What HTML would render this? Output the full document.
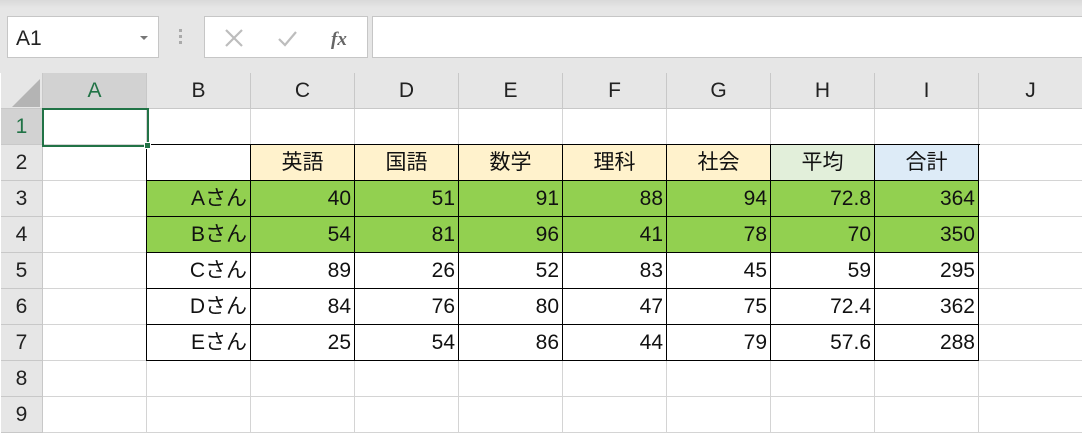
<!DOCTYPE html>
<html><head><meta charset="utf-8"><style>
*{box-sizing:border-box;margin:0;padding:0}
body{width:1082px;height:432px;overflow:hidden;background:#fff;font-family:"Liberation Sans","Noto Sans CJK JP",sans-serif;position:relative}
.top{position:absolute;left:0;top:0;width:1082px;height:73px;background:linear-gradient(#d9d9d9,#e6e6e6 8px,#e6e6e6)}
.nb{position:absolute;left:7px;top:16px;width:152px;height:42px;background:#fff;border:1px solid #c6c6c6;font-size:21px;color:#222;padding:10px 0 0 8px}
.nb:after{content:"";position:absolute;right:10px;top:19px;border:4px solid transparent;border-top:4px solid #777}
.dots{position:absolute;left:179px;top:29px;width:3px;height:16px;background:repeating-linear-gradient(#aaa 0 3px,transparent 3px 6px)}
.fb{position:absolute;left:204px;top:16px;width:164px;height:42px;background:#fff;border:1px solid #c6c6c6}
.fi{position:absolute;left:372px;top:16px;width:720px;height:42px;background:#fff;border:1px solid #c6c6c6}
.g{position:absolute;left:1px;top:73px;display:grid;grid-template-columns:42px repeat(10,104px);grid-auto-rows:36px}
.g div{border-right:1px solid #d4d4d4;border-bottom:1px solid #d4d4d4;font-size:21px;line-height:36px;color:#111;white-space:nowrap}
.g .h{background:#e6e6e6;border-color:#c8c8c8;text-align:center;color:#222}
.g .r{background:#e6e6e6;border-color:#c8c8c8;text-align:center;color:#222}
.g .sel{background:#d2d2d2;color:#217346}
.g .c{text-align:center}
.g .n{text-align:right;padding-right:3px}
.g .t{border-right:1px solid #000;border-bottom:1px solid #000}
.y{background:#fff2cc}.gr{background:#e2efda}.bl{background:#ddebf7}.gn{background:#92d050}
.corner{position:absolute;left:12px;top:79px;width:0;height:0;border-left:28px solid transparent;border-bottom:28px solid #b4b4b4}
.act{position:absolute;left:42px;top:108px;width:107px;height:39px;border:2px solid #217346}
.hd{position:absolute;left:144px;top:142px;width:7px;height:7px;background:#217346;border:1px solid #fff}
.lt{position:absolute;left:146px;top:144px;width:1px;height:217px;background:#000}
.tp{position:absolute;left:146px;top:144px;width:834px;height:1px;background:#000}
</style></head><body>
<div class="top"></div>
<div class="nb">A1</div>
<div class="dots"></div>
<div class="fb">
<svg width="164" height="42" style="position:absolute;left:0;top:0"><g stroke="#bdbdbd" stroke-width="2.2" fill="none"><path d="M21 13l16 16M37 13L21 29"/><path d="M74 22l6 6 11-13"/></g><text x="126" y="28" font-family="Liberation Serif,serif" font-style="italic" font-weight="bold" font-size="19" fill="#666">fx</text></svg>
</div>
<div class="fi"></div>
<div class="g">
<div class="h"></div><div class="h sel">A</div><div class="h">B</div><div class="h">C</div><div class="h">D</div><div class="h">E</div><div class="h">F</div><div class="h">G</div><div class="h">H</div><div class="h">I</div><div class="h">J</div>
<div class="r sel">1</div><div></div><div></div><div></div><div></div><div></div><div></div><div></div><div></div><div></div><div></div>
<div class="r">2</div><div></div><div class="t"></div><div class="t c y">英語</div><div class="t c y">国語</div><div class="t c y">数学</div><div class="t c y">理科</div><div class="t c y">社会</div><div class="t c gr">平均</div><div class="t c bl">合計</div><div></div>
<div class="r">3</div><div></div><div class="t n gn">Aさん</div><div class="t n gn">40</div><div class="t n gn">51</div><div class="t n gn">91</div><div class="t n gn">88</div><div class="t n gn">94</div><div class="t n gn">72.8</div><div class="t n gn">364</div><div></div>
<div class="r">4</div><div></div><div class="t n gn">Bさん</div><div class="t n gn">54</div><div class="t n gn">81</div><div class="t n gn">96</div><div class="t n gn">41</div><div class="t n gn">78</div><div class="t n gn">70</div><div class="t n gn">350</div><div></div>
<div class="r">5</div><div></div><div class="t n">Cさん</div><div class="t n">89</div><div class="t n">26</div><div class="t n">52</div><div class="t n">83</div><div class="t n">45</div><div class="t n">59</div><div class="t n">295</div><div></div>
<div class="r">6</div><div></div><div class="t n">Dさん</div><div class="t n">84</div><div class="t n">76</div><div class="t n">80</div><div class="t n">47</div><div class="t n">75</div><div class="t n">72.4</div><div class="t n">362</div><div></div>
<div class="r">7</div><div></div><div class="t n">Eさん</div><div class="t n">25</div><div class="t n">54</div><div class="t n">86</div><div class="t n">44</div><div class="t n">79</div><div class="t n">57.6</div><div class="t n">288</div><div></div>
<div class="r">8</div><div></div><div></div><div></div><div></div><div></div><div></div><div></div><div></div><div></div><div></div>
<div class="r">9</div><div></div><div></div><div></div><div></div><div></div><div></div><div></div><div></div><div></div><div></div>
</div>
<div class="corner"></div>
<div class="lt"></div><div class="tp"></div>
<div class="act"></div><div class="hd"></div>
</body></html>
